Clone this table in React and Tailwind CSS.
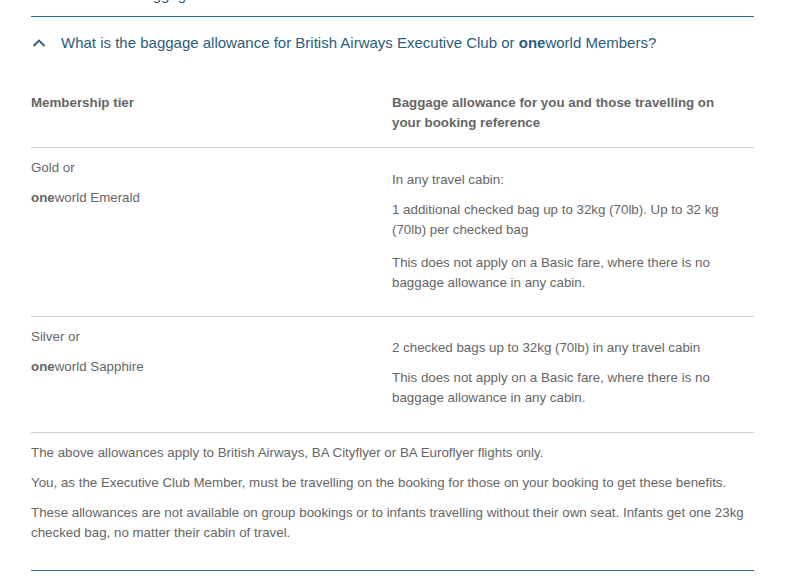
import React from "react";

function One() {
  return <span className="font-bold">one</span>;
}

export default function App() {
  return (
    <div className="w-[800px] h-[587px] overflow-hidden bg-white font-['Liberation_Sans',Arial,sans-serif] text-[#666666]">
      <div className="ml-[31px] w-[723px]">
        <div className="-mt-[15px] h-[31px] pl-[30px] text-[15px] leading-[20px] text-[#2b5c7d]">
          How much baggage can I take?
        </div>
        <div className="border-t border-[#2a7195]" />
        <div className="flex items-center h-[51px] text-[15px] leading-[20px] text-[#2b5c7d]">
          <svg width="14" height="10" viewBox="0 0 14 10" className="ml-[1px] mr-[15px]">
            <polyline points="1.5,8 7,2.5 12.5,8" fill="none" stroke="#2b5c7d" strokeWidth="1.8" />
          </svg>
          <span>
            What is the baggage allowance for British Airways Executive Club or <One />world Members?
          </span>
        </div>

        <div className="flex pt-[25px] pb-[14px] border-b border-[#d0d0d0] text-[13.33px] leading-[20px] font-bold">
          <div className="w-[361px]">Membership tier</div>
          <div className="w-[340px]">Baggage allowance for you and those travelling on your booking reference</div>
        </div>

        <div className="flex pt-[10px] pb-[23px] border-b border-[#d0d0d0] text-[13.33px] leading-[20px]">
          <div className="w-[361px]">
            <p>Gold or</p>
            <p className="mt-[10px]"><One />world Emerald</p>
          </div>
          <div className="w-[362px] pt-[12px]">
            <p>In any travel cabin:</p>
            <p className="mt-[10px]">1 additional checked bag up to 32kg (70lb). Up to 32 kg (70lb) per checked bag</p>
            <p className="mt-[13px]">This does not apply on a Basic fare, where there is no baggage allowance in any cabin.</p>
          </div>
        </div>

        <div className="flex pt-[10px] pb-[24px] border-b border-[#d0d0d0] text-[13.33px] leading-[20px]">
          <div className="w-[361px]">
            <p>Silver or</p>
            <p className="mt-[10px]"><One />world Sapphire</p>
          </div>
          <div className="w-[340px] pt-[11px]">
            <p>2 checked bags up to 32kg (70lb) in any travel cabin</p>
            <p className="mt-[10px]">This does not apply on a Basic fare, where there is no baggage allowance in any cabin.</p>
          </div>
        </div>

        <div className="pt-[10px] pb-[27px] text-[13.33px] leading-[20px] border-b border-[#2a7195]">
          <p>The above allowances apply to British Airways, BA Cityflyer or BA Euroflyer flights only.</p>
          <p className="mt-[10px]">You, as the Executive Club Member, must be travelling on the booking for those on your booking to get these benefits.</p>
          <p className="mt-[10px]">These allowances are not available on group bookings or to infants travelling without their own seat. Infants get one 23kg checked bag, no matter their cabin of travel.</p>
        </div>
      </div>
    </div>
  );
}
